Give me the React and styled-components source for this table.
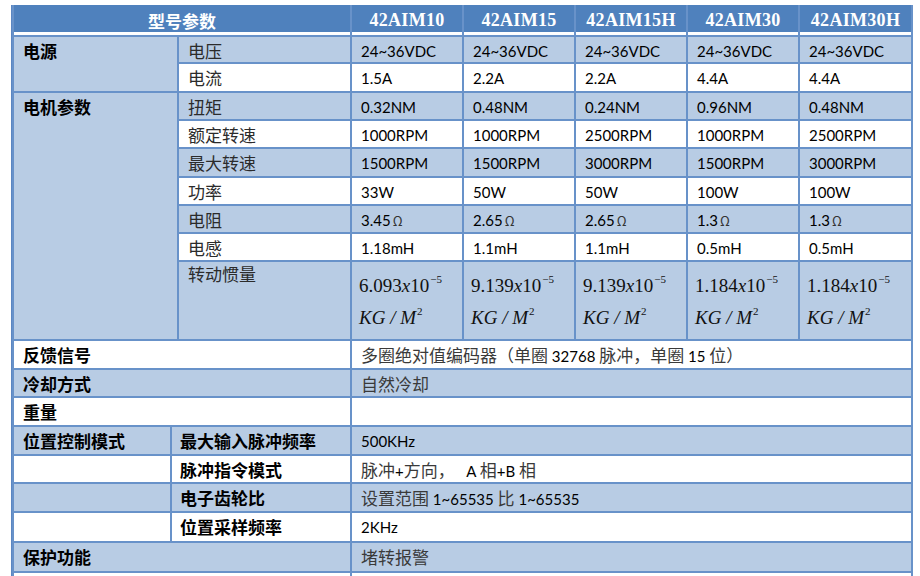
import React from 'react';
import styled, { createGlobalStyle, css } from 'styled-components';

const GlobalStyle = createGlobalStyle`
  html, body {
    margin: 0;
    padding: 0;
    background: #fff;
    overflow: hidden;
  }
  body {
    font-family: Lato, "Noto Sans CJK SC", sans-serif;
    color: #000;
  }
`;

const BLUE = '#b8cce4';

const Sheet = styled.div`
  display: grid;
  grid-template-columns: 156px 5px 171px repeat(4, 110px) 111px;
  grid-template-rows:
    30px 25px 27px 26px 26px 27px 26px 26px 26px 77px
    27px 26px 27px 27px 26px 27px 28px 28px 20px;
  gap: 2px;
  width: max-content;
  margin: 5px 0 0 11px;
  padding: 0 2px 2px;
  background: #6892c9;
  border-left: 1px solid #5b86c2;
`;

const HeadCell = styled.div`
  grid-column: ${(p) => p.$span || 'auto'};
  box-sizing: border-box;
  display: flex;
  justify-content: center;
  align-items: center;
  padding-top: 3px;
  background: #4f81bd;
  border-bottom: 3px solid #fff;
  color: #fff;
  font-family: "Noto Sans CJK SC", sans-serif;
  font-weight: 700;
  font-size: 17px;
`;

const ModelName = styled.span`
  font-family: "Liberation Serif", serif;
  font-weight: 700;
  font-size: 18px;
  letter-spacing: 0.3px;
`;

const Cell = styled.div`
  grid-column: ${(p) => p.$span || 'auto'};
  grid-row: ${(p) => p.$rows || 'auto'};
  box-sizing: border-box;
  padding: 3px 4px 0 9px;
  background: ${(p) => (p.$tone === 'blue' ? BLUE : '#fff')};
  font-size: 15px;
  line-height: 22px;
  white-space: nowrap;
`;

const Label = styled(Cell)`
  font-family: "Noto Sans CJK SC", sans-serif;
  font-size: 17px;
  color: #2b2b2b;
  ${(p) =>
    p.$strong &&
    css`
      font-weight: 700;
      color: #000;
    `}
  ${(p) => p.$indent && css`padding-left: ${p.$indent}px;`}
  ${(p) => p.$lift && css`padding-top: 1px;`}
`;

const Han = styled.span`
  font-family: "Noto Sans CJK SC", sans-serif;
  font-size: 17px;
  color: #3a3a3a;
`;

const Ohm = styled.span`
  font-family: "Noto Sans CJK SC", sans-serif;
  font-size: 13px;
  color: #333;
  margin-left: 2px;
`;

const Inertia = styled(Cell)`
  display: flex;
  flex-direction: column;
  padding: 8px 0 0 7px;
  font-family: "Liberation Serif", serif;
  font-size: 19px;
  line-height: 32px;
  color: #111;
`;

const Sup = styled.sup`
  font-size: 11px;
  line-height: 0;
  vertical-align: 9px;
  margin-left: 1px;
`;

const models = ['42AIM10', '42AIM15', '42AIM15H', '42AIM30', '42AIM30H'];

const groups = [
  {
    name: '电源',
    rows: [
      ['电压', ['24~36VDC', '24~36VDC', '24~36VDC', '24~36VDC', '24~36VDC']],
      ['电流', ['1.5A', '2.2A', '2.2A', '4.4A', '4.4A']],
    ],
  },
  {
    name: '电机参数',
    rows: [
      ['扭矩', ['0.32NM', '0.48NM', '0.24NM', '0.96NM', '0.48NM']],
      ['额定转速', ['1000RPM', '1000RPM', '2500RPM', '1000RPM', '2500RPM']],
      ['最大转速', ['1500RPM', '1500RPM', '3000RPM', '1500RPM', '3000RPM']],
      ['功率', ['33W', '50W', '50W', '100W', '100W']],
      ['电阻', ['3.45Ω', '2.65Ω', '2.65Ω', '1.3Ω', '1.3Ω']],
      ['电感', ['1.18mH', '1.1mH', '1.1mH', '0.5mH', '0.5mH']],
      ['转动惯量', ['6.093', '9.139', '9.139', '1.184', '1.184'], 'inertia'],
    ],
  },
];

const wide = [
  ['反馈信号', '多圈绝对值编码器（单圈\u00a032768\u00a0脉冲，单圈\u00a015\u00a0位）'],
  ['冷却方式', '自然冷却'],
  ['重量', ''],
];

const control = [
  ['位置控制模式', '最大输入脉冲频率', '500KHz'],
  ['', '脉冲指令模式', '脉冲+方向，\u00a0\u00a0 A 相+B 相'],
  ['', '电子齿轮比', '设置范围 1~65535 比 1~65535'],
  ['', '位置采样频率', '2KHz'],
];

// split mixed text so the Chinese runs get their own size
const CJK = /([\u3000-\u9fff\uff00-\uffef]+)/;
const mixed = (text) =>
  text
    .split(CJK)
    .filter(Boolean)
    .map((part, i) => (CJK.test(part) ? <Han key={i}>{part}</Han> : part));

const value = (v) =>
  v.endsWith('Ω') ? (
    <>
      {v.slice(0, -1)}
      <Ohm>Ω</Ohm>
    </>
  ) : (
    v
  );

const tone = (i) => (i % 2 === 0 ? 'blue' : 'white');

export default function App() {
  let idx = 0;
  const body = [];

  groups.forEach((g) => {
    body.push(
      <Label key={g.name} $tone="blue" $strong $span="span 2" $rows={`span ${g.rows.length}`}>
        {g.name}
      </Label>
    );
    g.rows.forEach(([label, vals, kind]) => {
      const t = tone(idx++);
      body.push(
        <Label key={label} $tone={t} $lift={kind === 'inertia'}>
          {label}
        </Label>
      );
      vals.forEach((v, j) =>
        body.push(
          kind === 'inertia' ? (
            <Inertia key={label + j} $tone={t}>
              <span>
                {v}
                <i>x</i>10<Sup>−5</Sup>
              </span>
              <span>
                <i>KG / M</i>
                <Sup>2</Sup>
              </span>
            </Inertia>
          ) : (
            <Cell key={label + j} $tone={t}>
              {value(v)}
            </Cell>
          )
        )
      );
    });
  });

  wide.forEach(([label, v]) => {
    const t = tone(idx++);
    body.push(
      <Label key={label} $tone={t} $strong $span="span 3">
        {label}
      </Label>,
      <Cell key={label + 'v'} $tone={t} $span="span 5">
        {mixed(v)}
      </Cell>
    );
  });

  control.forEach(([group, label, v]) => {
    const t = tone(idx++);
    body.push(
      <Label key={label + 'g'} $tone={t} $strong>
        {group}
      </Label>,
      <Label key={label} $tone={t} $strong $span="span 2" $indent={8}>
        {label}
      </Label>,
      <Cell key={label + 'v'} $tone={t} $span="span 5">
        {mixed(v)}
      </Cell>
    );
  });

  const t = tone(idx++);
  body.push(
    <Label key="保护功能" $tone={t} $strong $span="span 3">
      保护功能
    </Label>,
    <Cell key="保护v" $tone={t} $span="span 5">
      {mixed('堵转报警')}
    </Cell>
  );
  const last = tone(idx++);
  body.push(
    <Cell key="endA" $tone={last} $span="span 3" />,
    <Cell key="endB" $tone={last} $span="span 5" />
  );

  return (
    <>
      <GlobalStyle />
      <Sheet>
        <HeadCell $span="span 3">型号参数</HeadCell>
        {models.map((m) => (
          <HeadCell key={m}>
            <ModelName>{m}</ModelName>
          </HeadCell>
        ))}
        {body}
      </Sheet>
    </>
  );
}
